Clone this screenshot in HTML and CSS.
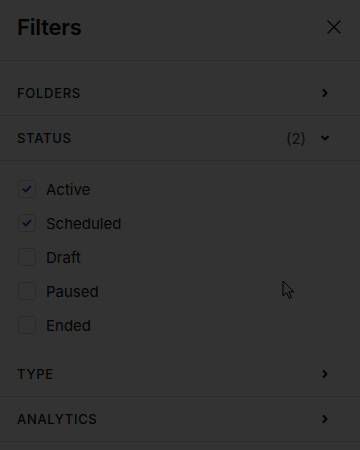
FILE: index.html
```html
<!DOCTYPE html>
<html lang="en">
<head>
    <meta charset="UTF-8">
    <meta name="viewport" content="width=device-width, initial-scale=1.0">
    <title>Filters</title>
    <link rel="stylesheet" href="styles.css">
</head>
<body>

    <div class="panel">
        <header class="panel-header">
            <h1>Filters</h1>
            <button class="close-btn" title="Close">
                <svg viewBox="0 0 14 14" fill="none" stroke="currentColor" stroke-width="1.4" stroke-linecap="round">
                    <path d="M1 1l12 12M13 1L1 13"></path>
                </svg>
            </button>
        </header>

        <div class="sections">
            <div class="section">
                <div class="section-head">
                    <span class="section-title">Folders</span>
                    <svg class="chev" viewBox="0 0 10 10" fill="none" stroke="currentColor" stroke-width="2" stroke-linecap="round" stroke-linejoin="round">
                        <path d="M3.5 2l3 3-3 3"></path>
                    </svg>
                </div>
            </div>

            <div class="section open">
                <div class="section-head">
                    <span class="section-title">Status</span>
                    <span class="count">(2)</span>
                    <svg class="chev" viewBox="0 0 10 10" fill="none" stroke="currentColor" stroke-width="2" stroke-linecap="round" stroke-linejoin="round">
                        <path d="M2 3.5l3 3 3-3"></path>
                    </svg>
                </div>
                <ul class="options">
                    <li class="option checked"><span class="box"><svg viewBox="0 0 12 12" fill="none" stroke="currentColor" stroke-width="2" stroke-linecap="round" stroke-linejoin="round"><path d="M2.5 6.2l2.3 2.3 4.7-5"></path></svg></span>Active</li>
                    <li class="option checked"><span class="box"><svg viewBox="0 0 12 12" fill="none" stroke="currentColor" stroke-width="2" stroke-linecap="round" stroke-linejoin="round"><path d="M2.5 6.2l2.3 2.3 4.7-5"></path></svg></span>Scheduled</li>
                    <li class="option"><span class="box"></span>Draft</li>
                    <li class="option"><span class="box"></span>Paused</li>
                    <li class="option"><span class="box"></span>Ended</li>
                </ul>
            </div>

            <div class="section">
                <div class="section-head">
                    <span class="section-title">Type</span>
                    <svg class="chev" viewBox="0 0 10 10" fill="none" stroke="currentColor" stroke-width="2" stroke-linecap="round" stroke-linejoin="round">
                        <path d="M3.5 2l3 3-3 3"></path>
                    </svg>
                </div>
            </div>

            <div class="section">
                <div class="section-head">
                    <span class="section-title">Analytics</span>
                    <svg class="chev" viewBox="0 0 10 10" fill="none" stroke="currentColor" stroke-width="2" stroke-linecap="round" stroke-linejoin="round">
                        <path d="M3.5 2l3 3-3 3"></path>
                    </svg>
                </div>
            </div>
        </div>

        <!-- mouse pointer from the capture -->
        <svg class="pointer" viewBox="0 0 14 20">
            <path d="M1 1v15l3.6-3.4 2.6 5.9 2.2-1-2.5-5.7H12z" fill="#fff" stroke="#000" stroke-width="1" stroke-linejoin="round"></path>
        </svg>
    </div>

    <div class="backdrop"></div>

</body>
</html>
```

FILE: styles.css
```css
:root {
    --text: #111;
    --muted: #444;
    --line: #d8d8d8;
    --box: #cfcfcf;
    --accent: #2a44c8;
}

*, *::before, *::after {
    box-sizing: border-box;
    margin: 0;
    padding: 0;
}

body {
    font-family: Inter, "Noto Sans", sans-serif;
    color: var(--text);
    background: #fff;
}

.panel {
    position: relative;
    width: 360px;
    min-height: 450px;
    background: #fff;
}

.panel-header {
    display: flex;
    align-items: center;
    justify-content: space-between;
    height: 61px;
    padding: 0 17px 6px 17px;
    border-bottom: 1px solid var(--line);
}

.panel-header h1 {
    font-size: 22px;
    font-weight: 600;
    letter-spacing: -0.2px;
}

.close-btn {
    display: flex;
    background: none;
    border: 0;
    color: var(--text);
    margin-right: 2px;
}

.close-btn svg {
    width: 14px;
    height: 14px;
}

.sections {
    padding-top: 10px;
}

.section {
    border-bottom: 1px solid var(--line);
}

.section.open {
    border-bottom: 0;
}

.section-head {
    display: flex;
    align-items: center;
    height: 44px;
    padding: 0 30px 0 17px;
}

.section-title {
    flex-grow: 1;
    font-size: 13px;
    font-weight: 500;
    text-transform: uppercase;
    letter-spacing: 0.7px;
}

.count {
    font-size: 15px;
    color: var(--muted);
    margin-right: 14px;
}

.chev {
    width: 10px;
    height: 10px;
}

.options {
    list-style: none;
    padding: 11px 0 10px;
    border-top: 1px solid var(--line);
}

.option {
    display: flex;
    align-items: center;
    gap: 10px;
    height: 34px;
    padding-left: 18px;
    font-size: 15px;
}

.box {
    display: flex;
    align-items: center;
    justify-content: center;
    width: 18px;
    height: 18px;
    border: 1px solid var(--box);
    border-radius: 3px;
    color: var(--accent);
}

.box svg {
    width: 12px;
    height: 12px;
}

.pointer {
    position: absolute;
    left: 282px;
    top: 280px;
    width: 14px;
    height: 20px;
}

.backdrop {
    position: fixed;
    inset: 0;
    background: rgba(0, 0, 0, 0.8);
}
```
